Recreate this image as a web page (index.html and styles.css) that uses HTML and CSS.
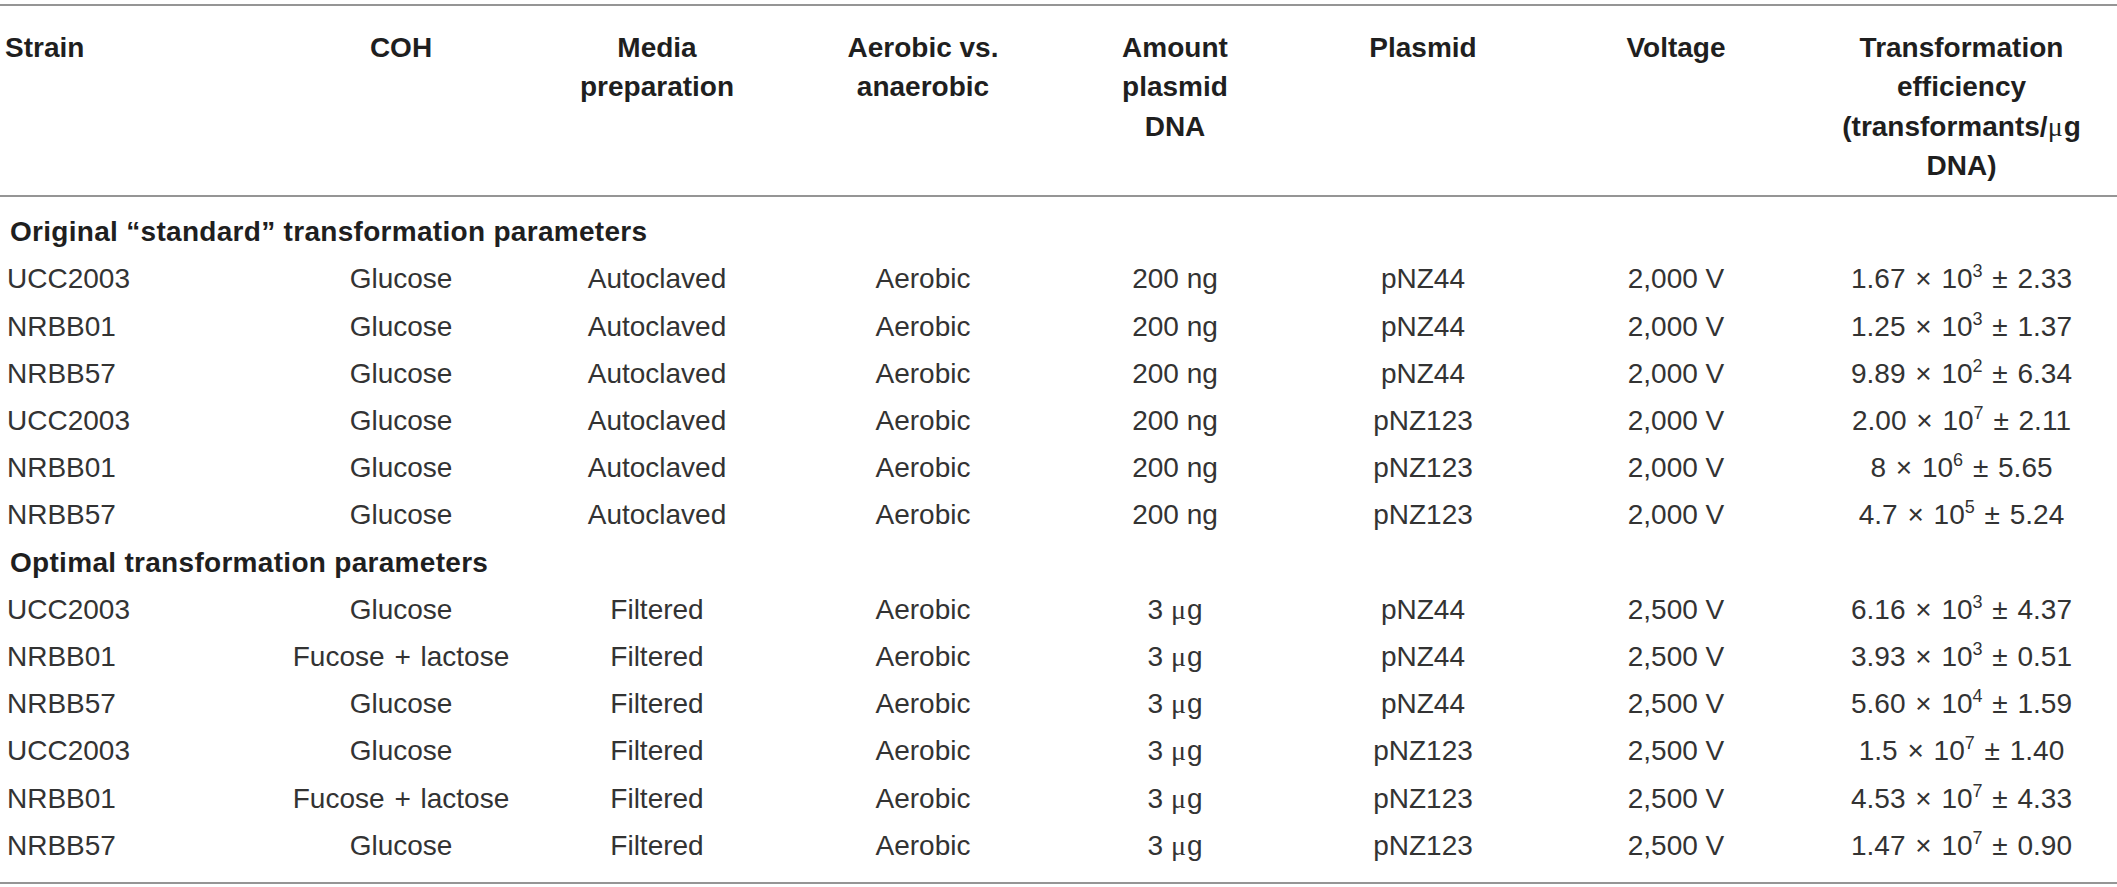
FILE: index.html
```html
<!DOCTYPE html>
<html>
<head>
  <title>Transformation parameters</title>
  <link rel="stylesheet" href="styles.css">
</head>
<body>
  <table class="params">
    <colgroup>
      <col class="c-strain">
      <col class="c-coh">
      <col class="c-media">
      <col class="c-air">
      <col class="c-amount">
      <col class="c-plasmid">
      <col class="c-volt">
      <col class="c-eff">
    </colgroup>
    <thead>
      <tr>
        <th class="left">Strain</th>
        <th>COH</th>
        <th>Media<br>preparation</th>
        <th>Aerobic vs.<br>anaerobic</th>
        <th>Amount<br>plasmid<br>DNA</th>
        <th>Plasmid</th>
        <th>Voltage</th>
        <th>Transformation<br>efficiency<br>(transformants/<span class="mu">μ</span>g<br>DNA)</th>
      </tr>
    </thead>
    <tbody>
      <tr class="section first">
        <td colspan="8">Original “standard” transformation parameters</td>
      </tr>
      <tr>
        <td class="left">UCC2003</td><td>Glucose</td><td>Autoclaved</td><td>Aerobic</td><td>200 ng</td><td>pNZ44</td><td>2,000 V</td>
        <td>1.67 <span class="op">×</span> 10<sup>3</sup> <span class="op">±</span> 2.33</td>
      </tr>
      <tr>
        <td class="left">NRBB01</td><td>Glucose</td><td>Autoclaved</td><td>Aerobic</td><td>200 ng</td><td>pNZ44</td><td>2,000 V</td>
        <td>1.25 <span class="op">×</span> 10<sup>3</sup> <span class="op">±</span> 1.37</td>
      </tr>
      <tr>
        <td class="left">NRBB57</td><td>Glucose</td><td>Autoclaved</td><td>Aerobic</td><td>200 ng</td><td>pNZ44</td><td>2,000 V</td>
        <td>9.89 <span class="op">×</span> 10<sup>2</sup> <span class="op">±</span> 6.34</td>
      </tr>
      <tr>
        <td class="left">UCC2003</td><td>Glucose</td><td>Autoclaved</td><td>Aerobic</td><td>200 ng</td><td>pNZ123</td><td>2,000 V</td>
        <td>2.00 <span class="op">×</span> 10<sup>7</sup> <span class="op">±</span> 2.11</td>
      </tr>
      <tr>
        <td class="left">NRBB01</td><td>Glucose</td><td>Autoclaved</td><td>Aerobic</td><td>200 ng</td><td>pNZ123</td><td>2,000 V</td>
        <td>8 <span class="op">×</span> 10<sup>6</sup> <span class="op">±</span> 5.65</td>
      </tr>
      <tr>
        <td class="left">NRBB57</td><td>Glucose</td><td>Autoclaved</td><td>Aerobic</td><td>200 ng</td><td>pNZ123</td><td>2,000 V</td>
        <td>4.7 <span class="op">×</span> 10<sup>5</sup> <span class="op">±</span> 5.24</td>
      </tr>
      <tr class="section">
        <td colspan="8">Optimal transformation parameters</td>
      </tr>
      <tr>
        <td class="left">UCC2003</td><td>Glucose</td><td>Filtered</td><td>Aerobic</td><td>3 <span class="mu">μ</span>g</td><td>pNZ44</td><td>2,500 V</td>
        <td>6.16 <span class="op">×</span> 10<sup>3</sup> <span class="op">±</span> 4.37</td>
      </tr>
      <tr>
        <td class="left">NRBB01</td><td>Fucose <span class="op">+</span> lactose</td><td>Filtered</td><td>Aerobic</td><td>3 <span class="mu">μ</span>g</td><td>pNZ44</td><td>2,500 V</td>
        <td>3.93 <span class="op">×</span> 10<sup>3</sup> <span class="op">±</span> 0.51</td>
      </tr>
      <tr>
        <td class="left">NRBB57</td><td>Glucose</td><td>Filtered</td><td>Aerobic</td><td>3 <span class="mu">μ</span>g</td><td>pNZ44</td><td>2,500 V</td>
        <td>5.60 <span class="op">×</span> 10<sup>4</sup> <span class="op">±</span> 1.59</td>
      </tr>
      <tr>
        <td class="left">UCC2003</td><td>Glucose</td><td>Filtered</td><td>Aerobic</td><td>3 <span class="mu">μ</span>g</td><td>pNZ123</td><td>2,500 V</td>
        <td>1.5 <span class="op">×</span> 10<sup>7</sup> <span class="op">±</span> 1.40</td>
      </tr>
      <tr>
        <td class="left">NRBB01</td><td>Fucose <span class="op">+</span> lactose</td><td>Filtered</td><td>Aerobic</td><td>3 <span class="mu">μ</span>g</td><td>pNZ123</td><td>2,500 V</td>
        <td>4.53 <span class="op">×</span> 10<sup>7</sup> <span class="op">±</span> 4.33</td>
      </tr>
      <tr class="last">
        <td class="left">NRBB57</td><td>Glucose</td><td>Filtered</td><td>Aerobic</td><td>3 <span class="mu">μ</span>g</td><td>pNZ123</td><td>2,500 V</td>
        <td>1.47 <span class="op">×</span> 10<sup>7</sup> <span class="op">±</span> 0.90</td>
      </tr>
    </tbody>
  </table>
</body>
</html>
```

FILE: styles.css
```css
* {
  margin: 0;
  padding: 0;
  box-sizing: border-box;
}

body {
  background-color: #ffffff;
  font-family: "Liberation Sans", Arial, sans-serif;
  color: #333333;
}

.params {
  width: 2117px;
  margin-top: 4px;
  border-collapse: collapse;
  table-layout: fixed;
  border-top: 2px solid #959595;
  border-bottom: 2px solid #959595;
  font-size: 28px;
}

.c-strain { width: 270px; }
.c-coh { width: 262px; }
.c-media { width: 250px; }
.c-air { width: 282px; }
.c-amount { width: 222px; }
.c-plasmid { width: 260px; }
.c-volt { width: 260px; }
.c-eff { width: 311px; }

.params thead th {
  font-weight: bold;
  color: #1f1f1f;
  line-height: 39.3px;
  vertical-align: top;
  text-align: center;
  padding: 22px 0 10px 0;
  border-bottom: 2px solid #959595;
  white-space: nowrap;
}

.params td {
  text-align: center;
  line-height: 47.2px;
  white-space: nowrap;
  vertical-align: top;
}

.params th:nth-child(6),
.params td:nth-child(6) {
  padding-left: 14px;
}

.params th.left {
  text-align: left;
  padding-left: 5px;
}

.params td.left {
  text-align: left;
  padding-left: 7px;
}

.params .section td {
  text-align: left;
  font-weight: bold;
  color: #1f1f1f;
  padding-left: 10px;
  letter-spacing: 0.3px;
}

.params .first td {
  padding-top: 11px;
}

.params .last td {
  padding-bottom: 13px;
}

.op {
  margin: 0 2px;
}

.mu {
  font-family: "Liberation Serif", "Times New Roman", serif;
  font-weight: normal;
  margin-right: 1px;
}

sup {
  font-size: 18px;
  line-height: 0;
  vertical-align: 11px;
}
```
